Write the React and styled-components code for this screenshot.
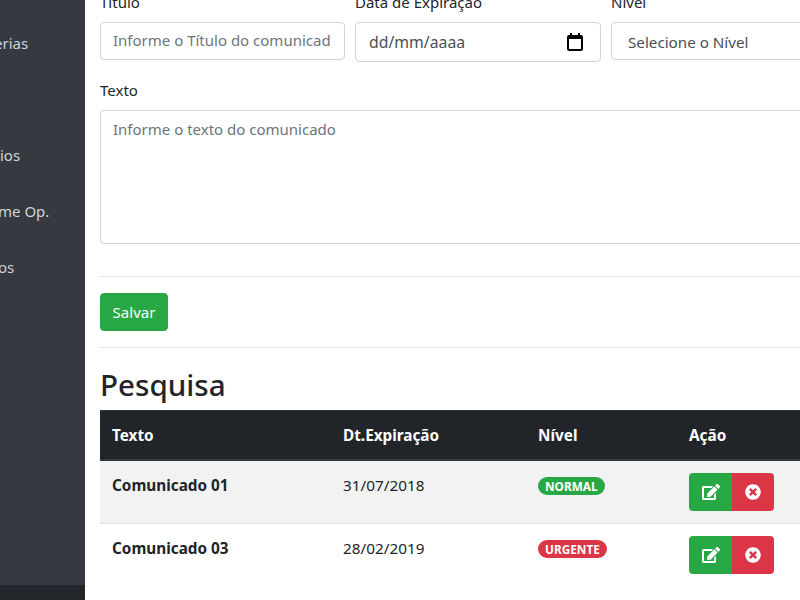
import React from 'react'
import styled, { createGlobalStyle } from 'styled-components'
import { FaEdit, FaTimesCircle } from 'react-icons/fa'

const GlobalStyle = createGlobalStyle`
  * {
    box-sizing: border-box;
  }

  html,
  body {
    margin: 0;
    padding: 0;
    height: 100%;
    overflow: hidden;
    background: #fff;
  }

  body {
    font-family: "Noto Sans", "Open Sans", sans-serif;
    font-size: 15px;
    line-height: 24px;
    color: #212529;
  }
`

const Page = styled.div`
  display: flex;
  width: 800px;
  height: 600px;
  overflow: hidden;
`

const Sidebar = styled.nav`
  flex: 0 0 85px;
  display: flex;
  flex-direction: column;
  background: #343a40;
  color: #ced4da;
  overflow: hidden;
`

const NavList = styled.div`
  flex: 1;
  padding-top: 31px;
`

const NavItem = styled.div`
  height: 56px;
  white-space: nowrap;
  margin-top: ${(p) => p.$skip || 0}px;
  text-indent: ${(p) => p.$indent || 0}px;
`

const SidebarFooter = styled.div`
  height: 15px;
  background: #23272b;
`

const Main = styled.main`
  flex: 1;
  min-width: 0;
  overflow: hidden;
  padding-left: 15px;
`

const Content = styled.div`
  width: 860px;
  margin-top: -10px;
`

const FormRow = styled.div`
  display: grid;
  grid-template-columns: 245px 246px 1fr;
  column-gap: 10px;
  margin-bottom: 16px;
`

const Field = styled.div`
  display: flex;
  flex-direction: column;
  align-items: stretch;
`

const FieldLabel = styled.label`
  display: block;
  margin-bottom: 8px;
`

const Input = styled.input`
  width: 100%;
  height: 38px;
  padding: 5px 13px 7px 12px;
  border: 1px solid #ced4da;
  border-radius: 4px;
  font: inherit;
  color: #495057;

  &::placeholder {
    color: #6c757d;
    opacity: 1;
  }
`

const DateBox = styled.div`
  display: flex;
  align-items: center;
  justify-content: space-between;
  height: 40px;
  padding: 0 17px 0 13px;
  border: 1px solid #ced4da;
  border-radius: 4px;
  color: #495057;
  font-size: 15.8px;
`

const Select = styled.select`
  width: 100%;
  height: 38px;
  padding: 7px 12px 5px;
  border: 1px solid #ced4da;
  border-radius: 4px;
  background: #fff;
  font: inherit;
  font-size: 15.2px;
  color: #495057;
`

const TextArea = styled.textarea`
  display: block;
  width: 100%;
  height: 134px;
  padding: 6px 12px;
  border: 1px solid #ced4da;
  border-radius: 4px;
  font: inherit;
  resize: none;

  &::placeholder {
    color: #6c757d;
    opacity: 1;
  }
`

const Divider = styled.hr`
  margin: ${(p) => p.$top || 16}px 0 16px;
  border: 0;
  border-top: 1px solid rgba(0, 0, 0, 0.1);
`

const SaveButton = styled.button`
  display: block;
  width: 68px;
  height: 38px;
  padding: 6px 0;
  border: 1px solid #28a745;
  border-radius: 4px;
  background: #28a745;
  color: #fff;
  font: inherit;
`

const Title = styled.h2`
  margin: 0 0 6px;
  padding-top: 2px;
  font-size: 29.6px;
  line-height: 38.4px;
  font-weight: 500;
`

const Table = styled.table`
  width: 100%;
  table-layout: fixed;
  border-collapse: collapse;
  font-size: 15.3px;
`

const HeadCell = styled.th`
  width: ${(p) => p.$width}px;
  padding: 12px;
  border-top: 1px solid #32383e;
  border-bottom: 2px solid #32383e;
  background: #212529;
  color: #fff;
  text-align: left;
  font-weight: 700;
`

const Row = styled.tr`
  background: ${(p) => (p.$striped ? '#f2f2f2' : '#fff')};
`

const Cell = styled.td`
  padding: 12px;
  border-top: 1px solid #dee2e6;
  vertical-align: top;
  font-weight: ${(p) => (p.$bold ? 700 : 400)};

  tr:first-child > & {
    border-top: 0;
  }
`

const Badge = styled.span`
  display: inline-block;
  padding: 3px 7px;
  border-radius: 10px;
  background: ${(p) => (p.$urgent ? '#dc3545' : '#28a745')};
  color: #fff;
  font-size: 11.8px;
  font-weight: 700;
  line-height: 12px;
  vertical-align: baseline;
`

const ActionGroup = styled.div`
  display: inline-flex;
`

const ActionButton = styled.button`
  display: flex;
  align-items: center;
  justify-content: center;
  width: ${(p) => (p.$danger ? 42 : 43)}px;
  height: 38px;
  padding: 0;
  border: 0;
  border-radius: ${(p) => (p.$danger ? '0 4px 4px 0' : '4px 0 0 4px')};
  background: ${(p) => (p.$danger ? '#dc3545' : '#28a745')};
  color: #fff;
  font-size: 16px;
`

const CalendarIcon = () => (
  <svg width="16" height="18" viewBox="0 0 16 18" aria-hidden="true">
    <path
      fill="#000"
      fillRule="evenodd"
      d="M3 0h2v2h6V0h2v2h1a2 2 0 0 1 2 2v12a2 2 0 0 1-2 2H2a2 2 0 0 1-2-2V4a2 2 0 0 1 2-2h1V0zM2 6v10h12V6H2z"
    />
  </svg>
)

const rows = [
  { text: 'Comunicado 01', date: '31/07/2018', level: 'NORMAL', urgent: false },
  { text: 'Comunicado 03', date: '28/02/2019', level: 'URGENTE', urgent: true },
]

export default function App() {
  return (
    <Page>
      <GlobalStyle />
      <Sidebar>
        <NavList>
          <NavItem $indent={-6}>erias</NavItem>
          <NavItem $skip={56}>ios</NavItem>
          <NavItem $indent={-2}>me Op.</NavItem>
          <NavItem $indent={-2}>os</NavItem>
        </NavList>
        <SidebarFooter />
      </Sidebar>
      <Main>
        <Content>
          <FormRow>
            <Field>
              <FieldLabel>Título</FieldLabel>
              <Input placeholder="Informe o Título do comunicado" />
            </Field>
            <Field>
              <FieldLabel>Data de Expiração</FieldLabel>
              <DateBox>
                dd/mm/aaaa
                <CalendarIcon />
              </DateBox>
            </Field>
            <Field>
              <FieldLabel>Nível</FieldLabel>
              <Select defaultValue="">
                <option value="">Selecione o Nível</option>
              </Select>
            </Field>
          </FormRow>
          <FieldLabel>Texto</FieldLabel>
          <TextArea placeholder="Informe o texto do comunicado" />
          <Divider $top={32} />
          <SaveButton>Salvar</SaveButton>
          <Divider />
          <Title>Pesquisa</Title>
          <Table>
            <thead>
              <tr>
                <HeadCell $width={231}>Texto</HeadCell>
                <HeadCell $width={195}>Dt.Expiração</HeadCell>
                <HeadCell $width={151}>Nível</HeadCell>
                <HeadCell>Ação</HeadCell>
              </tr>
            </thead>
            <tbody>
              {rows.map((row, i) => (
                <Row key={row.text} $striped={i % 2 === 0}>
                  <Cell $bold>{row.text}</Cell>
                  <Cell>{row.date}</Cell>
                  <Cell>
                    <Badge $urgent={row.urgent}>{row.level}</Badge>
                  </Cell>
                  <Cell>
                    <ActionGroup>
                      <ActionButton><FaEdit size={18} /></ActionButton>
                      <ActionButton $danger><FaTimesCircle size={16} /></ActionButton>
                    </ActionGroup>
                  </Cell>
                </Row>
              ))}
            </tbody>
          </Table>
        </Content>
      </Main>
    </Page>
  )
}
